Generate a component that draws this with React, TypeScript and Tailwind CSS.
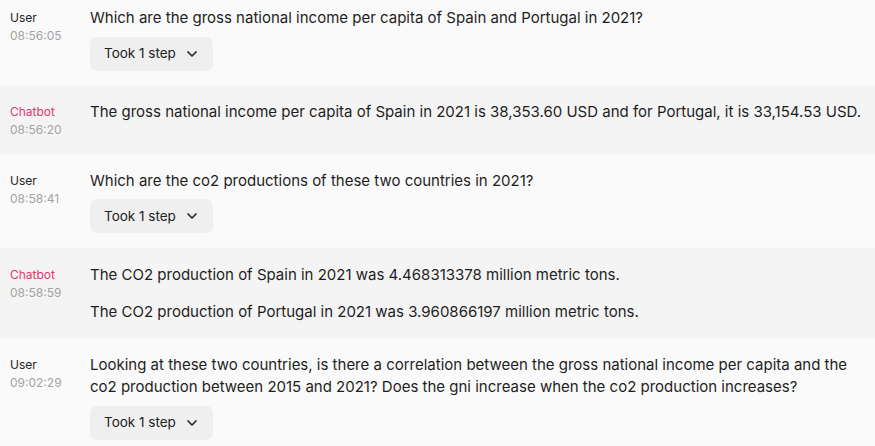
import React from "react";

function Chevron() {
  return (
    <svg width="16" height="16" viewBox="0 0 24 24" fill="none" stroke="#2a2a2a" strokeWidth="2.6" strokeLinecap="round" strokeLinejoin="round">
      <path d="m6 9 6 6 6-6" />
    </svg>
  );
}

function StepButton() {
  return (
    <div className="mt-[7px] flex">
      <div className="flex h-[34px] items-center rounded-[7px] bg-[#efefef] pl-[14px] pr-[13px] text-[13.5px] text-[#222]">
        <span>Took 1 step</span>
        <span className="ml-[8px] flex items-center"><Chevron /></span>
      </div>
    </div>
  );
}

function Row({
  who,
  time,
  bot,
  children,
  className,
}: {
  who: string;
  time: string;
  bot?: boolean;
  children: React.ReactNode;
  className?: string;
}) {
  return (
    <div className={`flex ${bot ? "bg-[#f4f4f4]" : "bg-[#fafafa]"} pr-[10px] ${className ?? ""}`}>
      <div className="w-[90px] shrink-0 pl-[10px] pt-[2px]">
        <div className={`text-[12px] leading-[18px] ${bot ? "text-[#df3a6a]" : "text-[#222]"}`}>{who}</div>
        <div className="text-[12px] leading-[18px] text-[#a3a3a3]">{time}</div>
      </div>
      <div className="min-w-0 flex-1 text-[15px] leading-[22.5px] text-[#1e1e1e]">{children}</div>
    </div>
  );
}

export default function App() {
  return (
    <div className="h-[446px] w-[875px] overflow-hidden bg-[#fafafa]" style={{ fontFamily: "Inter, 'Noto Sans', sans-serif" }}>
      <Row who="User" time="08:56:05" className="pt-[7px] pb-[14px]">
        <div>Which are the gross national income per capita of Spain and Portugal in 2021?</div>
        <StepButton />
      </Row>
      <Row who="Chatbot" time="08:56:20" bot className="pt-[16px] pb-[15px]">
        <div>The gross national income per capita of Spain in 2021 is 38,353.60 USD and for Portugal, it is 33,154.53 USD.</div>
      </Row>
      <Row who="User" time="08:58:41" className="pt-[16px] pb-[15px]">
        <div>Which are the co2 productions of these two countries in 2021?</div>
        <StepButton />
      </Row>
      <Row who="Chatbot" time="08:58:59" bot className="pt-[15.5px] pb-[14.5px]">
        <div>The CO2 production of Spain in 2021 was 4.468313378 million metric tons.</div>
        <div className="mt-[14.5px]">The CO2 production of Portugal in 2021 was 3.960866197 million metric tons.</div>
      </Row>
      <Row who="User" time="09:02:29" className="pt-[16px] pb-[15px]">
        <div>
          Looking at these two countries, is there a correlation between the gross national income per capita and the co2 production between 2015 and 2021? Does the gni increase when the co2 production increases?
        </div>
        <StepButton />
      </Row>
    </div>
  );
}
